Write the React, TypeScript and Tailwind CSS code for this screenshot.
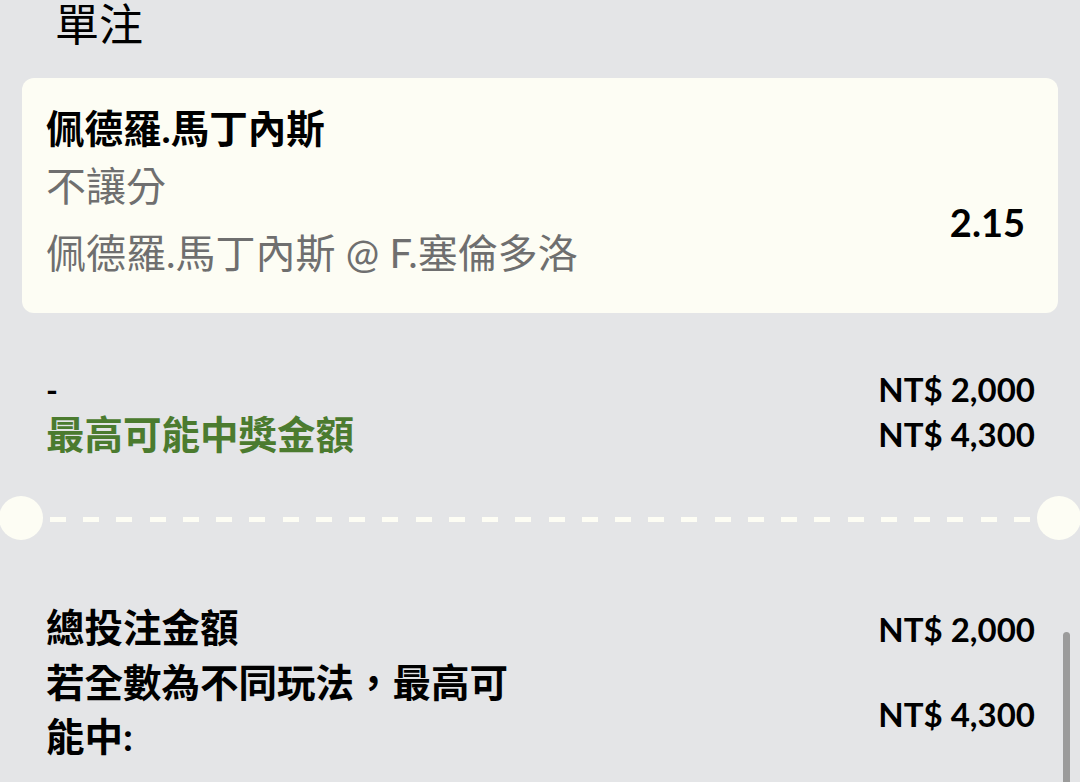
import React from 'react';

const font = "font-['Lato','Noto_Sans_CJK_TC',sans-serif]";

function Separator() {
  return (
    <div className="flex items-center h-[44px] -ml-[1px] -mr-[1px]">
      <div className="w-[44px] h-[44px] rounded-full bg-[#fdfdf4] shrink-0" />
      <div className="flex-1 flex justify-between mx-[7px] mt-[3px]">
        {Array.from({ length: 30 }).map((_, i) => (
          <div key={i} className="w-[16px] h-[5px] bg-[#fdfdf4]" />
        ))}
      </div>
      <div className="w-[44px] h-[44px] rounded-full bg-[#fdfdf4] shrink-0" />
    </div>
  );
}

export default function App() {
  return (
    <div className={`relative w-[1080px] h-[782px] overflow-hidden bg-[#e4e5e7] text-black ${font}`}>
      <div className="pl-[55px] text-[44px] leading-[48px]">單注</div>

      <div className="mx-[22px] mt-[30px] rounded-[12px] bg-[#fdfdf4] pl-[24px] pr-[33px] pt-[21px] pb-[31px]">
        <div className="text-[38.5px] leading-[58px] font-bold">佩德羅.馬丁內斯</div>
        <div className="flex items-center justify-between">
          <div className="text-[40px] text-[#6f6f6f]">
            <div className="leading-[58px]">不讓分</div>
            <div className="leading-[58px] mt-[9px]">佩德羅.馬丁內斯 @ F.塞倫多洛</div>
          </div>
          <div className="text-[38px] font-bold mt-[6px]">2.15</div>
        </div>
      </div>

      <div className="pl-[46px] pr-[45px] mt-[54px]">
        <div className="flex justify-between items-center h-[45px]">
          <span className="text-[32px] font-bold">-</span>
          <span className="text-[33px] font-bold">NT$ 2,000</span>
        </div>
        <div className="flex justify-between items-center h-[45px]">
          <span className="text-[38.5px] font-bold text-[#4b7b2f]">最高可能中獎金額</span>
          <span className="text-[33px] font-bold">NT$ 4,300</span>
        </div>
      </div>

      <div className="mt-[39px]">
        <Separator />
      </div>

      <div className="pl-[46px] pr-[45px] mt-[59px]">
        <div className="flex justify-between items-center">
          <span className="text-[38.5px] leading-[54px] font-bold">總投注金額</span>
          <span className="text-[33px] font-bold mt-[6px]">NT$ 2,000</span>
        </div>
        <div className="flex justify-between items-center">
          <span className="w-[480px] text-[38.5px] leading-[54px] font-bold">若全數為不同玩法，最高可能中:</span>
          <span className="text-[33px] font-bold mt-[12px]">NT$ 4,300</span>
        </div>
      </div>

      <div className="absolute left-[1063px] top-[632px] w-[7px] h-[160px] rounded-t-full bg-[#9b9b9b]" />
    </div>
  );
}
